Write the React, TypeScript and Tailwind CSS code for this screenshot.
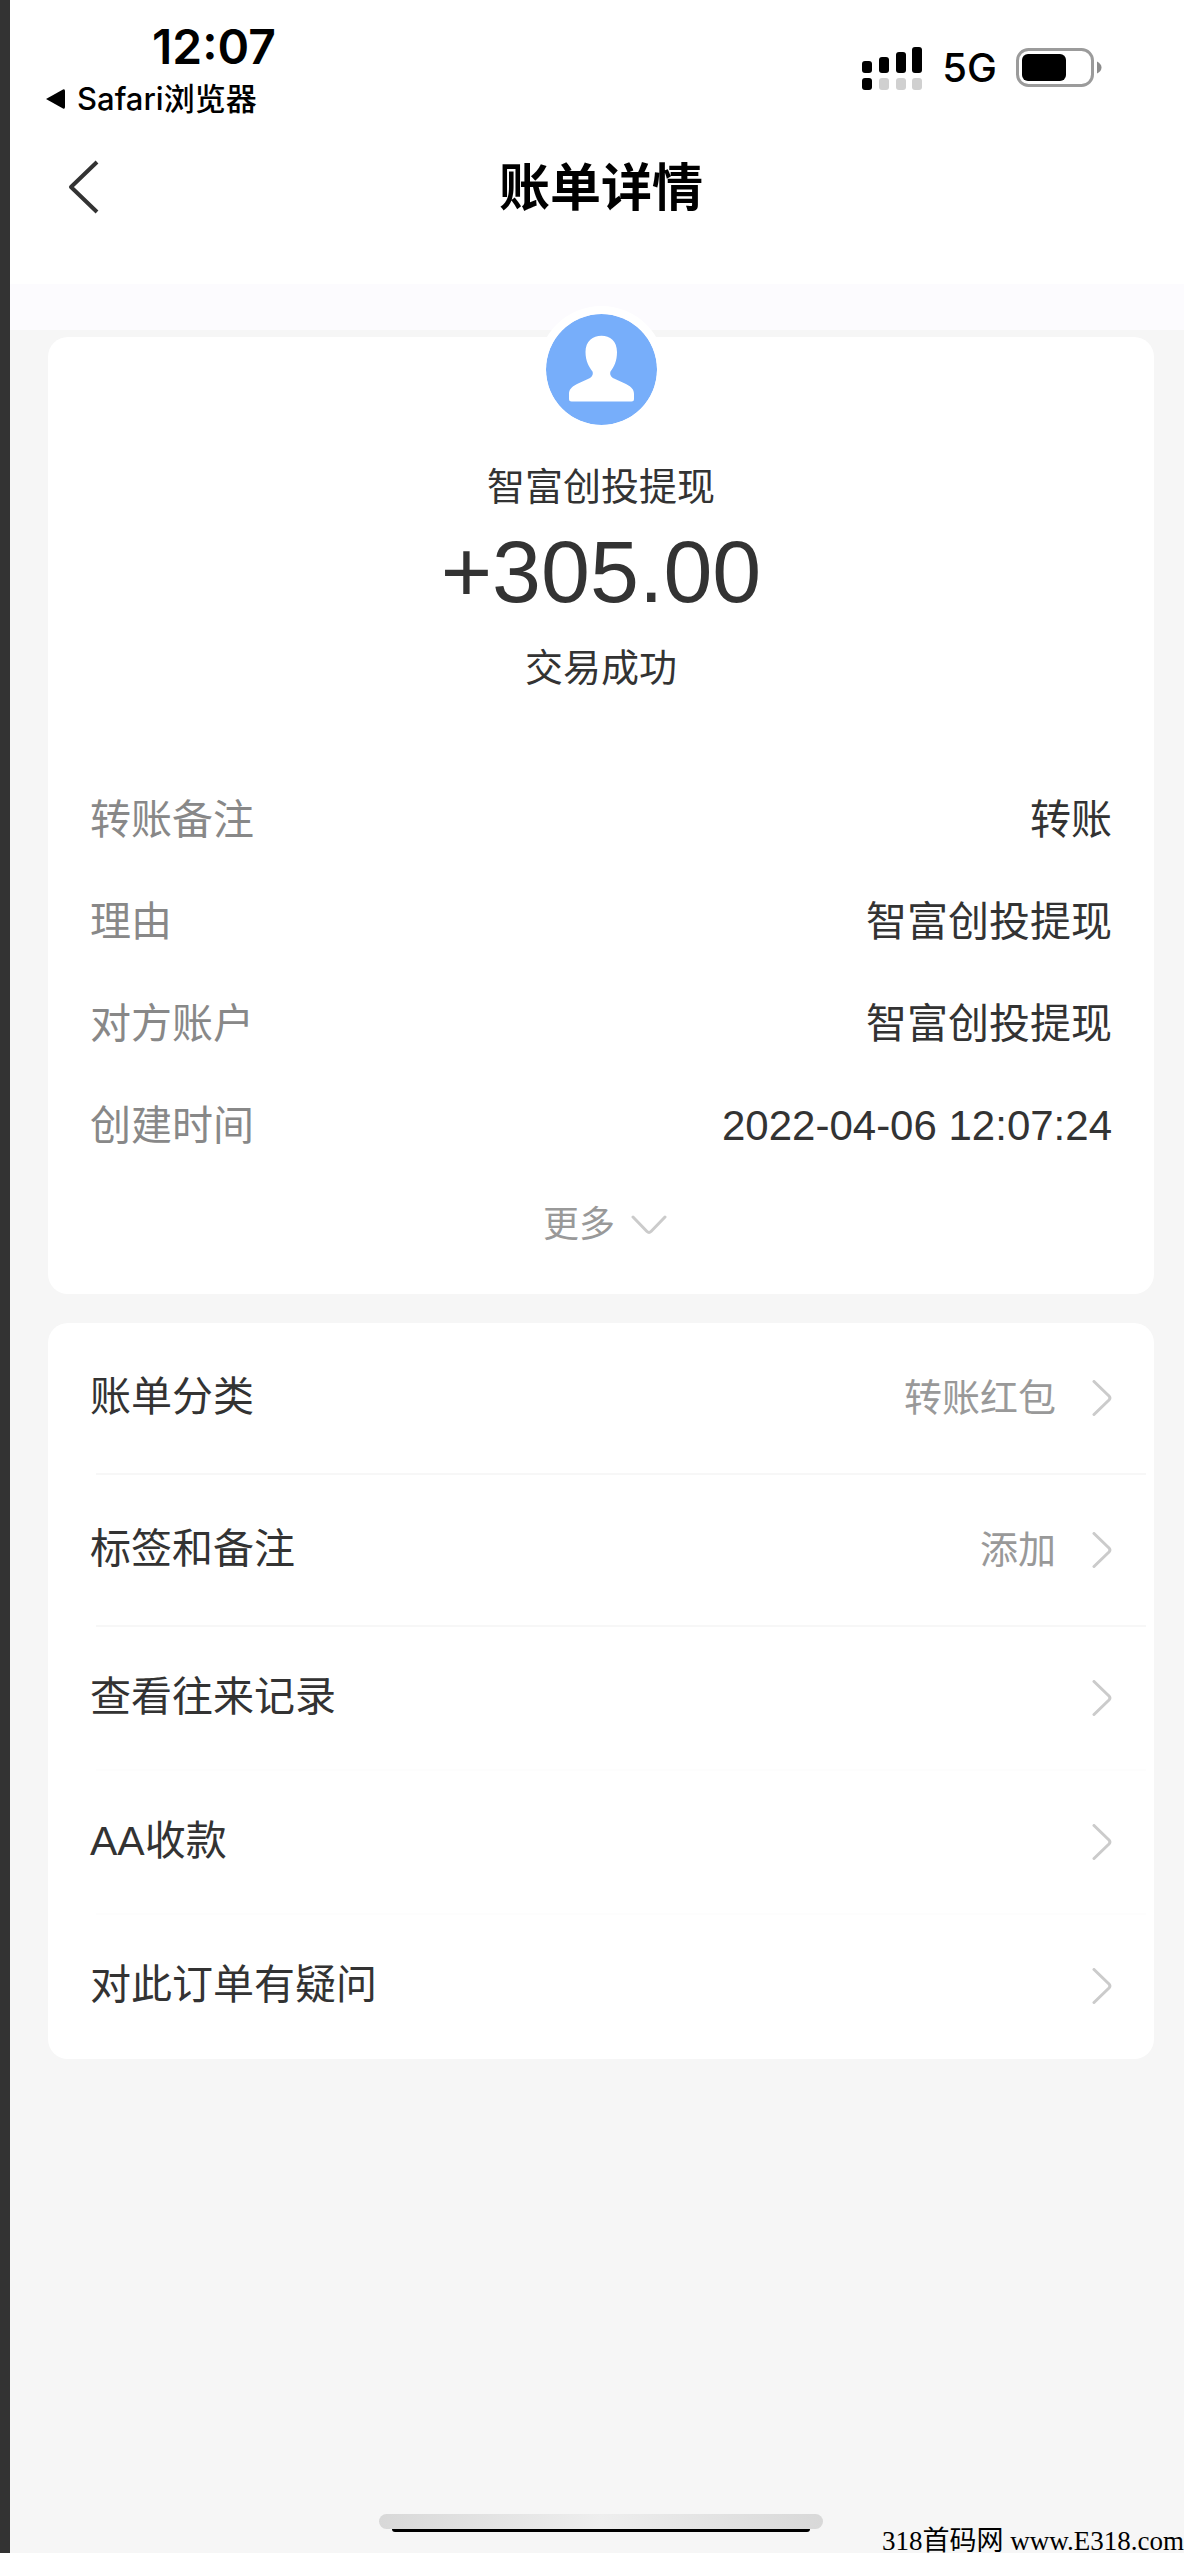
import React from 'react';

const details = [
  { label: '转账备注', value: '转账' },
  { label: '理由', value: '智富创投提现' },
  { label: '对方账户', value: '智富创投提现' },
];

const tall = 'h-[152px] after:bg-[#f7f7f7]';
const short = 'h-36 after:bg-[#fdfdfd]';

const actions = [
  { label: '账单分类', value: '转账红包', size: tall },
  { label: '标签和备注', value: '添加', size: tall },
  { label: '查看往来记录', value: '', size: short },
  { label: 'AA收款', value: '', size: short },
  { label: '对此订单有疑问', value: '', size: 'h-36 after:hidden' },
];

function SignalIcon() {
  return (
    <svg width="61" height="43" viewBox="0 0 61 43" aria-hidden="true">
      <rect x="0" y="14" width="10" height="12" rx="3" />
      <rect x="17" y="10" width="10" height="16" rx="3" />
      <rect x="34" y="5" width="10" height="21" rx="3" />
      <rect x="50" y="0" width="10" height="26" rx="3" />
      <rect x="0" y="31" width="10" height="12" rx="3" />
      <g fill="#d0d0d0">
        <rect x="17" y="31" width="10" height="12" rx="3" />
        <rect x="34" y="31" width="10" height="12" rx="3" />
        <rect x="50" y="31" width="10" height="12" rx="3" />
      </g>
    </svg>
  );
}

function BatteryIcon() {
  return (
    <svg width="86" height="40" viewBox="0 0 86 40" aria-hidden="true">
      <rect x="1.5" y="1.5" width="75" height="36" rx="11" fill="none" stroke="#9b9b9b" strokeWidth="3" />
      <rect x="6" y="6" width="44" height="27" rx="6" />
      <path d="M81 13.5c3 1.5 4.5 3.500 4.500 6s-1.500 4.500-4.500 6z" fill="#8c8c8c" />
    </svg>
  );
}

function ChevronRight() {
  return (
    <svg width="20" height="36" viewBox="0 0 20 36" fill="none" stroke="#cbcbcb" strokeWidth="3" aria-hidden="true">
      <path d="M2 1.500 17 16q1.800 2 0 4L2 34.500" strokeLinecap="round" strokeLinejoin="round" />
    </svg>
  );
}

export default function App() {
  return (
    <div
      lang="zh-CN"
      className="relative flex min-h-screen flex-col border-l-[10px] border-[#333] bg-[#f6f6f6] font-['Liberation_Sans','Noto_Sans_CJK_SC',sans-serif] text-[#333]"
    >
      <header className="bg-white pr-[30px] pl-9 text-black">
        {/* Barra de estado */}
        <div className="flex h-[130px] items-start justify-between font-['Inter','Noto_Sans_CJK_SC',sans-serif]">
          <div>
            <div className="pt-[19px] pl-[106px] text-[48px] leading-[56px] font-semibold">12:07</div>
            <a href="#safari" className="mt-1 flex items-center gap-3 text-[31px] leading-10 font-medium">
              <svg width="19" height="20" viewBox="0 0 19 20" aria-hidden="true">
                <path d="M0 10 17 .5q2-.8 2 1.500v16q0 2.300-2 1.500z" />
              </svg>
              Safari浏览器
            </a>
          </div>
          <div className="flex items-center gap-[19px] pt-[43px] pr-[52px]">
            <SignalIcon />
            <span className="text-[40px] leading-[50px] font-medium">5G</span>
            <BatteryIcon />
          </div>
        </div>

        <div className="grid h-[154px] grid-cols-[1fr_auto_1fr] items-start pl-0.5">
          <button type="button" aria-label="返回" className="flex h-[114px] w-20 items-center pl-5">
            <svg width="31" height="54" viewBox="0 0 31 54" fill="none" stroke="#333" strokeWidth="4" aria-hidden="true">
              <path d="M29 2 3 27l26 25" strokeLinejoin="round" />
            </svg>
          </button>
          <h1 className="text-[51px] leading-[118px] font-bold">账单详情</h1>
        </div>
      </header>
      <div className="h-[46px] bg-[#fcfbfe]" />

      <main className="flex flex-1 flex-col pt-[7px] pr-[30px] pl-[38px]">
        <section className="flex flex-col items-center rounded-[20px] bg-white px-[42px] pb-[21px]">
          <svg className="-mt-[23px] rounded-full ring-8 ring-white" width="111" height="111" viewBox="0 0 111 111" aria-hidden="true">
            <circle cx="55.5" cy="55.5" r="55.5" fill="#77aefa" />
            <path
              fill="#fff"
              d="M55.500 21.700C64 21.700 71 27 71 38c0 9-3 15-6.500 19.500-1 3 .5 5.500 3.500 7l12 5.500c6 3 8 6 8 10v5a2.500 2.500 0 0 1-2.500 2.500h-60A2.500 2.500 0 0 1 23 85v-5c0-4 2-7 8-10l12-5.500c3-1.500 4.500-4 3.500-7C43 53 39.500 47 39.500 38c0-11 7.500-16.300 16-16.300z"
            />
          </svg>
          <p className="mt-[34px] text-[38px] leading-[56px]">智富创投提现</p>
          <p className="mt-[7px] text-[88px] leading-[100px]">+305.00</p>
          <p className="mt-[18px] text-[38px] leading-[56px]">交易成功</p>

          <dl className="mt-[73px] w-full text-[41px] leading-[102px]">
            {details.map((row) => (
              <div key={row.label} className="flex justify-between">
                <dt className="text-[#888]">{row.label}</dt>
                <dd>{row.value}</dd>
              </div>
            ))}
            <div className="flex justify-between">
              <dt className="text-[#888]">创建时间</dt>
              <dd className="text-[42px]">2022-04-06 12:07:24</dd>
            </div>
          </dl>

          <button type="button" className="flex h-24 items-center gap-4 pl-2 text-[36px] text-[#999]">
            更多
            <svg width="36" height="20" viewBox="0 0 36 20" fill="none" stroke="#cbcbcb" strokeWidth="3" aria-hidden="true">
              <path d="M2 2 16 16.500q2 1.800 4 0L34 2" strokeLinecap="round" />
            </svg>
          </button>
        </section>

        <section className="mt-[29px] overflow-hidden rounded-[20px] bg-white">
          {actions.map((item) => (
            <button
              key={item.label}
              type="button"
              className={`relative flex w-full items-center px-[42px] pb-0.5 text-[41px] after:absolute after:right-2 after:bottom-0 after:left-12 after:h-0.5 ${item.size}`}
            >
              <span>{item.label}</span>
              <span className="mr-9 ml-auto text-[38px] text-[#999]">{item.value}</span>
              <ChevronRight />
            </button>
          ))}
        </section>

        {/* Indicador de inicio */}
        <div className="mx-auto mt-auto mb-[21px] w-[444px]">
          <div className="h-[15px] rounded-lg bg-linear-to-r from-[#d8d8d8] via-[#eee] to-[#d8d8d8]" />
          <div className="mx-[13px] h-[3px] rounded-b-sm bg-black" />
        </div>
      </main>

      <div className="absolute right-0 bottom-0 font-['Liberation_Serif','Noto_Sans_CJK_SC',serif] text-[27px] leading-6 text-black">
        318首码网 www.E318.com
      </div>
    </div>
  );
}
